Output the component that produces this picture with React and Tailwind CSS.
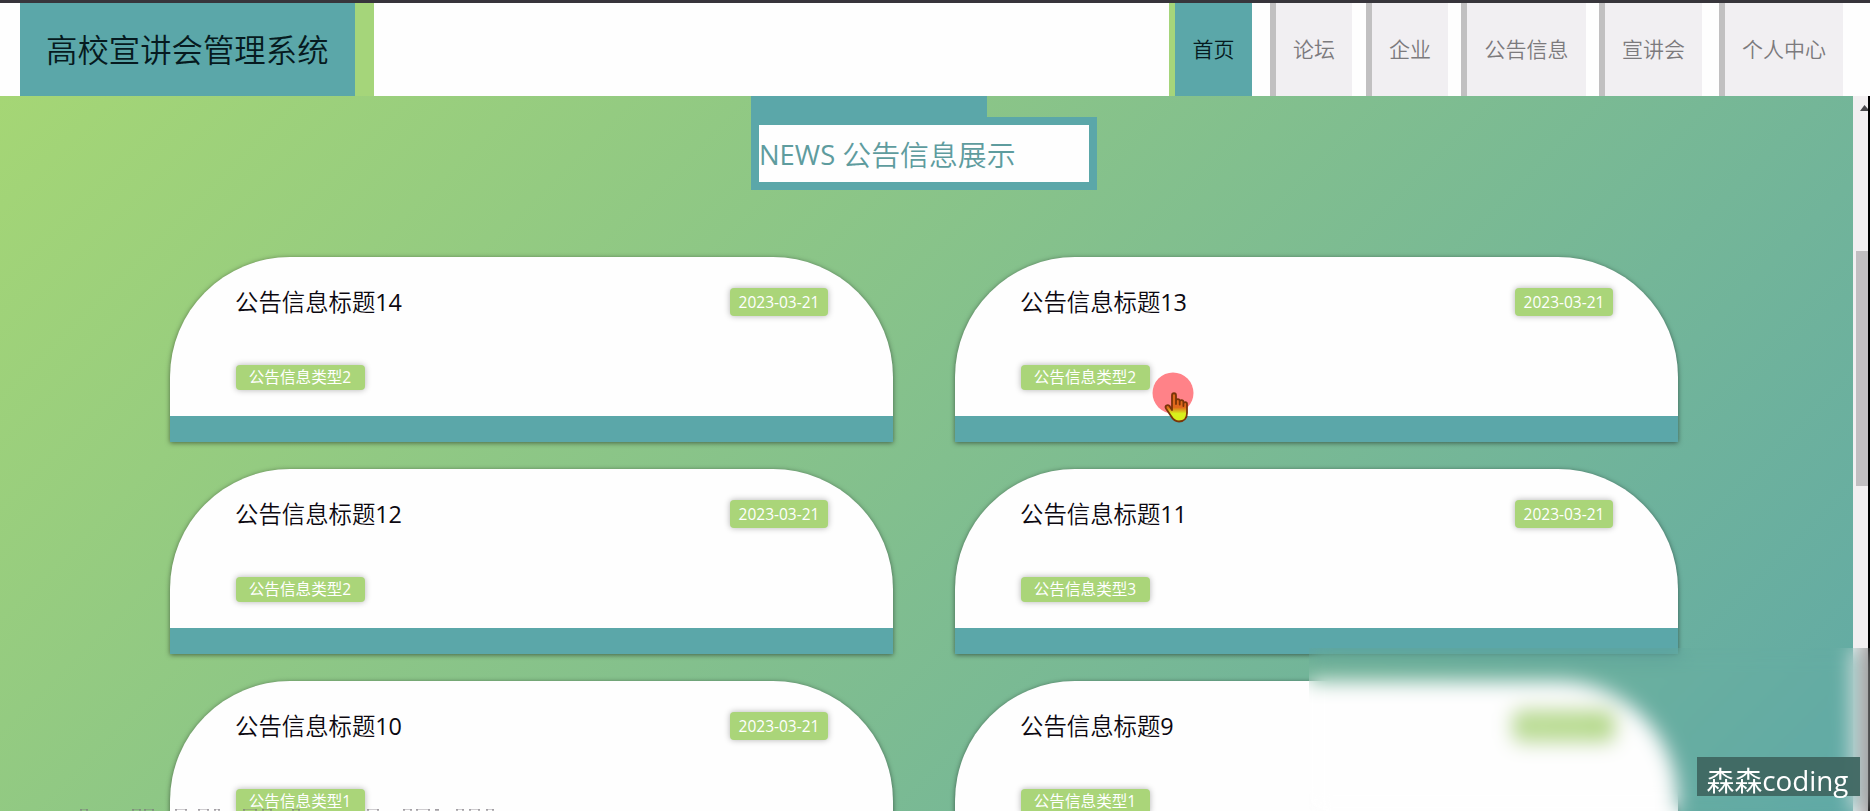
import React from "react";

const navItems = [
  { label: "论坛", box: "w-[82px] ml-[18px]" },
  { label: "企业", box: "w-[82px] ml-[14px]" },
  { label: "公告信息", box: "w-[125px] ml-[13px]" },
  { label: "宣讲会", box: "w-[103px] ml-[13px]" },
  { label: "个人中心", box: "w-[124px] ml-[17px]" },
];

const notices = [
  { no: "14", type: "公告信息类型2" },
  { no: "13", type: "公告信息类型2" },
  { no: "12", type: "公告信息类型2" },
  { no: "11", type: "公告信息类型3" },
  { no: "10", type: "公告信息类型1" },
  { no: "9", type: "公告信息类型1" },
];

// x offset and width of each glyph top peeking above the lower edge
const subtitleTops = [
  [80, 8], [132, 9], [144, 10], [175, 12], [198, 11], [214, 6], [243, 14], [262, 10], [292, 8],
  [367, 12], [403, 9], [416, 14], [435, 4], [456, 8], [469, 11], [486, 8],
];

function Header() {
  return (
    <header className="flex h-[93px] shrink-0 bg-[#fefefe] pl-5">
      <h1 className="flex w-[354px] items-center whitespace-nowrap border-r-[19px] border-[#a5d57a] bg-[#5ba7a9] pl-[26px] text-[31.4px] font-[350] text-[#061a20]">
        高校宣讲会管理系统
      </h1>
      <nav className="ml-[795px] flex text-[21px] font-[350]">
        <a className="flex w-[83px] items-center justify-center whitespace-nowrap border-l-[6px] border-[#a5d57a] bg-[#5ba7a9] text-[#061a20]">
          首页
        </a>
        {navItems.map((n) => (
          <a
            key={n.label}
            className={
              "flex items-center justify-center whitespace-nowrap border-l-[6px] border-[#c1c0c1] bg-[#f1eff2] text-[#7c7a7d] " +
              n.box
            }
          >
            {n.label}
          </a>
        ))}
      </nav>
    </header>
  );
}

function Notice({ no, type }) {
  return (
    <article className="h-[185px] w-[723px] rounded-t-[120px] border-b-[26px] border-[#5ba7a9] bg-[#fefefe] px-[65px] pt-[31px] shadow-[0_1px_5px_rgba(0,0,0,0.5)]">
      <div className="flex h-7 items-center justify-between">
        <h3 className="whitespace-nowrap pt-0.5 text-[23.4px] font-[350] text-[#0c0810]">
          公告信息标题<span className="font-normal tracking-[-0.3px]">{no}</span>
        </h3>
        <time className="flex h-7 w-[98px] items-center justify-center rounded-[4px] bg-[#aad579] pt-px text-[15.5px] text-white shadow-[0_0_6px_rgba(0,0,0,0.3)]">
          2023-03-21
        </time>
      </div>
      <span className="ml-px mt-[49px] flex h-[25px] w-[129px] items-center justify-center whitespace-nowrap rounded-[4px] bg-[#aad579] pr-px pt-px text-[15.6px] text-white shadow-[0_0_6px_rgba(0,0,0,0.3)]">
        {type}
      </span>
    </article>
  );
}

function HandCursor() {
  return (
    <div className="absolute left-[1152px] top-[368px] h-[54px] w-[44px]">
      <svg width="44" height="54" viewBox="0 0 44 54">
        <circle cx="21" cy="22" r="20.5" fill="#ff8288" />
        <defs>
          <linearGradient id="hand" x1="0" y1="0" x2="0" y2="1">
            <stop offset="0.5" stopColor="#e0681c" />
            <stop offset="0.72" stopColor="#d8f01c" />
          </linearGradient>
        </defs>
        <path
          d="M20 39V24.500c0-3 4-3 4 0V33v-3c0-2.500 3.700-2.500 3.700 0v3.500-2.500c0-2.500 3.700-2.300 3.700 0V35v-2c0-2.500 3.600-2.300 3.600 0v9c0 5-3 8.500-8 8.500-4 0-6-2-8-5.500l-5-7.500c-1.500-2.500 1.500-4.500 3.500-2.500z"
          fill="url(#hand)"
          stroke="#7a3408"
          strokeWidth="1.8"
          strokeLinejoin="round"
        />
      </svg>
    </div>
  );
}

export default function App() {
  return (
    <div className="relative flex h-[811px] w-[1870px] flex-col overflow-hidden border-t-[3px] border-[#37353b] bg-[#fefefe] font-['Open_Sans','Noto_Sans_CJK_SC',sans-serif]">
      <Header />
      <div className="flex min-h-0 flex-1">
        <main className="w-[1853px] overflow-hidden bg-[linear-gradient(135deg,#a5d675_0%,#60a9a6_100%)]">
          <div className="ml-[751px] h-[94px] w-[346px]">
            <div className="h-[21px] w-[236px] bg-[#5ba7a9]" />
            <h2 className="flex h-[73px] w-full items-center whitespace-pre border-8 border-[#5ba7a9] bg-[#fefefe] pt-0.5 text-[28.9px] font-[350] text-[#5e9c9e]">
              <span className="text-[27.4px] font-normal">NEWS </span>公告信息展示
            </h2>
          </div>
          <section className="ml-[170px] mt-[67px] grid grid-cols-[723px_723px] gap-x-[62px] gap-y-[27px]">
            {notices.map((n) => (
              <Notice key={n.no} {...n} />
            ))}
          </section>
        </main>
        <div className="flex w-[15px] flex-col items-end bg-[#f2eff1] pt-[9px]">
          <svg width="8" height="6" viewBox="0 0 8 6">
            <path d="M0 6L4.500 0L8 4V6z" fill="#4a484c" />
          </svg>
          <div className="mt-[140px] h-[235px] w-[12px] bg-[#c1bec1]" />
        </div>
        <div className="w-[2px] bg-black" />
      </div>
      <HandCursor />
      <svg className="absolute bottom-0 left-0" width="520" height="3" viewBox="0 0 520 3">
        {subtitleTops.map(([x, w]) => (
          <g key={x} fill="#77737a">
            <rect x={x} y="1" width={w} height="1" opacity="0.35" />
            <rect x={x} y="1" width="2" height="2" opacity="0.5" />
            <rect x={x + w - 2} y="1" width="2" height="2" opacity="0.5" />
          </g>
        ))}
      </svg>
      <div className="absolute bottom-0 left-[1309px] right-0 top-[645px] backdrop-blur-[10px]">
        <div className="ml-auto h-full w-4 bg-linear-to-r from-transparent to-black/25" />
      </div>
      <div className="absolute left-[1697px] top-[754px] flex h-[39px] w-[163px] items-center justify-center whitespace-nowrap bg-[#3f6762]/95 pr-0.5 pt-[9px] text-[27.8px] text-white">
        森森coding
      </div>
    </div>
  );
}
